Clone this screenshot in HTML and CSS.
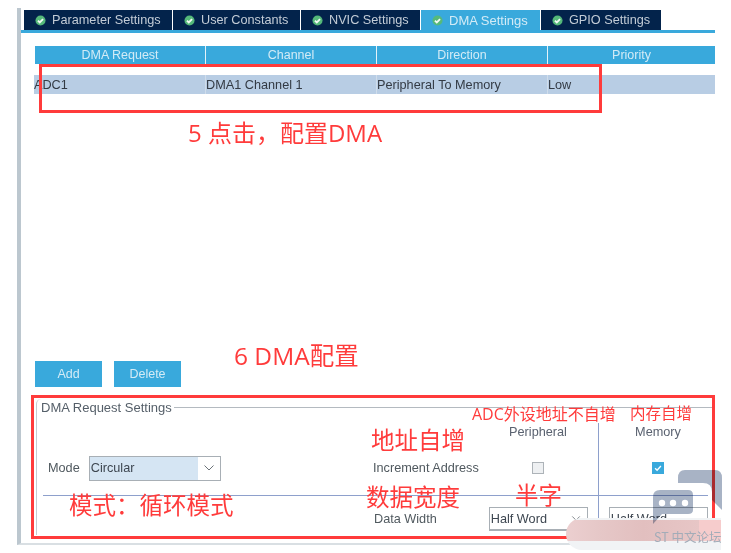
FILE: index.html
```html
<!DOCTYPE html>
<html lang="zh">
<head>
<meta charset="utf-8">
<title>DMA Settings</title>
<link rel="stylesheet" href="styles.css">
</head>
<body>
<div class="window">
  <nav class="tabs">
    <div class="tab t1"><svg class="ok" viewBox="0 0 12 12"><circle cx="6" cy="6" r="5.5"/><path d="M3.2 6.1l2 2 3.6-3.6"/></svg>Parameter Settings</div>
    <div class="tab t2"><svg class="ok" viewBox="0 0 12 12"><circle cx="6" cy="6" r="5.5"/><path d="M3.2 6.1l2 2 3.6-3.6"/></svg>User Constants</div>
    <div class="tab t3"><svg class="ok" viewBox="0 0 12 12"><circle cx="6" cy="6" r="5.5"/><path d="M3.2 6.1l2 2 3.6-3.6"/></svg>NVIC Settings</div>
    <div class="tab t4 active"><svg class="ok" viewBox="0 0 12 12"><circle cx="6" cy="6" r="5.5"/><path d="M3.2 6.1l2 2 3.6-3.6"/></svg>DMA Settings</div>
    <div class="tab t5"><svg class="ok" viewBox="0 0 12 12"><circle cx="6" cy="6" r="5.5"/><path d="M3.2 6.1l2 2 3.6-3.6"/></svg>GPIO Settings</div>
  </nav>

  <div class="thead">
    <div class="th c1">DMA Request</div>
    <div class="th c2">Channel</div>
    <div class="th c3">Direction</div>
    <div class="th c4">Priority</div>
  </div>
  <div class="trow">
    <div class="td c1">ADC1</div>
    <div class="td c2">DMA1 Channel 1</div>
    <div class="td c3">Peripheral To Memory</div>
    <div class="td c4">Low</div>
  </div>

  <div class="buttons">
    <button class="btn">Add</button>
    <button class="btn">Delete</button>
  </div>

  <section class="group">
    <div class="legend"><span>DMA Request Settings</span></div>
    <div class="grid-top">
      <div class="mode-cell">
        <span class="lbl">Mode</span>
        <div class="select"><span class="sel-text">Circular</span><span class="sel-arrow"><svg viewBox="0 0 12 8"><path d="M1.5 1.5L6 6l4.5-4.5"/></svg></span></div>
      </div>
      <div class="inc-cell">
        <span class="lbl inc-lbl">Increment Address</span>
        <div class="per-col"><span class="col-h">Peripheral</span><span class="cb"></span></div>
        <div class="mem-col"><span class="col-h">Memory</span><span class="cb checked"><svg viewBox="0 0 12 12"><path d="M2.5 6.2l2.4 2.4 4.6-5"/></svg></span></div>
      </div>
    </div>
    <div class="rule"></div>
    <div class="grid-bottom">
      <span class="lbl dw-lbl">Data Width</span>
      <div class="mini-select"><span>Half Word</span><svg viewBox="0 0 12 8"><path d="M1.5 1.5L6 6l4.5-4.5"/></svg></div>
      <div class="mini-select second"><span>Half Word</span></div>
    </div>
  </section>
</div>

<div class="mark box1"></div>
<div class="mark box2"></div>
<div class="note n1">5 点击，配置DMA</div>
<div class="note n2">6 DMA配置</div>
<div class="note n3">地址自增</div>
<div class="note n4">数据宽度</div>
<div class="note n5">半字</div>
<div class="note n6">模式：循环模式</div>
<div class="note n7">ADC外设地址不自增</div>
<div class="note n8">内存自增</div>

<div class="smear"></div>
<svg class="wm-icon" viewBox="0 0 76 60">
  <path class="wm-shape" d="M28 10Q28 2 35 2H65Q72 2 72 10V42L62 32V24Q62 15 53 15H28Z"/>
  <path class="wm-shape" d="M3 29Q3 22 10 22H38Q43 22 43 27V42Q43 46 38 46H12L3 56Z"/>
</svg>
<svg class="wm-dots" viewBox="0 0 76 60">
  <circle cx="12" cy="35" r="3.2"/><circle cx="23" cy="35" r="3.2"/><circle cx="35" cy="35" r="3.2"/>
</svg>
<div class="wm-text">ST 中文论坛</div>
</body>
</html>
```
FILE: styles.css
```css
* { box-sizing: border-box; }
html, body { margin: 0; padding: 0; background: #fff; }
body { width: 731px; height: 553px; overflow: hidden; position: relative; font-family: "Liberation Sans", "Noto Sans CJK SC", sans-serif; }

.window { margin: 8px 0 0 17px; width: 698px; height: 537px; border-left: 4px solid #bcc7cf; border-bottom: 2px solid #d9dfe3; display: flex; flex-direction: column; position: relative; }

.tabs { display: flex; gap: 1px; height: 23px; margin-top: 2px; padding-left: 3px; border-bottom: 3px solid #3aa9dc; flex: none; }
.tab { height: 20px; background: #03234b; color: #c3ccd6; font-size: 12.7px; display: flex; align-items: center; padding-left: 11px; gap: 6px; white-space: nowrap; }
.tab.active { background: #39a9dc; color: #d3ebf6; font-size: 13px; }
.t1 { width: 148px; } .t2 { width: 127px; } .t3 { width: 119px; } .t4 { width: 119px; } .t5 { width: 120px; }
.ok { width: 11px; height: 11px; flex: none; }
.ok circle { fill: #55b97a; }
.ok path { fill: none; stroke: #f2faf4; stroke-width: 2; }

.thead { display: flex; height: 18px; margin: 13px 0 0 14px; background: #39a9dc; flex: none; }
.th { color: #d3ebf6; font-size: 12.5px; display: flex; align-items: center; justify-content: center; border-right: 1px solid #e4f2f9; }
.thead .c1 { width: 171px; } .thead .c2 { width: 171px; } .thead .c3 { width: 171px; } .thead .c4 { width: 167px; border-right: 0; }

.trow { display: flex; height: 19px; margin: 11px 0 0 13px; background: #b8cde4; flex: none; }
.td { color: #333a44; font-size: 12.7px; display: flex; align-items: center; border-right: 1px solid #cfdcea; }
.trow .c1 { width: 172px; } .trow .c2 { width: 171px; } .trow .c3 { width: 171px; } .trow .c4 { width: 167px; border-right: 0; }

.buttons { display: flex; gap: 12px; margin: 267px 0 0 14px; flex: none; }
.btn { width: 67px; height: 26px; border: 0; padding: 0; background: #39a9dc; color: #d3ebf6; font: 12.5px "Liberation Sans", sans-serif; }

.group { position: relative; margin: 12px 0 0 15px; height: 136px; border-left: 1px solid #c5cbd0; border-top-left-radius: 5px; flex: none; }
.legend { height: 16px; display: flex; align-items: center; font-size: 13px; color: #555f69; margin-left: -1px; }
.legend span { padding-left: 5px; padding-right: 2px; white-space: nowrap; }
.legend::after { content: ""; flex: 1; height: 1px; background: #b4bac0; }

.grid-top { display: flex; height: 80px; margin-left: 6px; }
.mode-cell { width: 325px; flex: none; display: flex; align-items: center; padding: 26px 0 0 5px; gap: 9px; }
.lbl { font-size: 12.7px; color: #50595f; white-space: nowrap; display: block; line-height: 14px; }
.select { width: 132px; height: 25px; border: 1px solid #a8afb5; display: flex; background: #fff; }
.sel-text { width: 108px; background: #d5e5f3; font-size: 12.7px; color: #3d4650; padding-left: 1px; display: flex; align-items: center; }
.sel-arrow { flex: 1; display: flex; align-items: center; justify-content: center; }
.sel-arrow svg { width: 12px; height: 8px; }
svg path { fill: none; }
.sel-arrow path, .mini-select path { stroke: #6b7278; stroke-width: 1; }

.inc-cell { display: flex; padding-left: 5px; flex: none; }
.inc-lbl { margin-top: 46px; width: 105px; flex: none; }
.per-col, .mem-col { display: flex; flex-direction: column; align-items: center; width: 120px; flex: none; padding-top: 10px; position: relative; }
.mem-col::before { content: ""; position: absolute; left: 0; top: 8px; width: 1px; height: 100px; background: #8ea0cc; }
.col-h { font-size: 12.7px; color: #5a6270; line-height: 14px; }
.cb { width: 12px; height: 12px; margin-top: 23px; background: #eef0f2; border: 1px solid #adb3b8; display: block; }
.cb.checked { background: #39a9dc; border-color: #39a9dc; }
.cb svg { width: 10px; height: 10px; display: block; }
.cb svg path { stroke: #fff; stroke-width: 1.6; }

.rule { height: 1px; margin: 0 7px 0 6px; background: #8ea0cc; }

.grid-bottom { height: 38px; display: flex; align-items: flex-start; }
.dw-lbl { margin: 16px 0 0 337px; }
.mini-select { width: 99px; height: 24px; margin: 11px 0 0 52px; border: 1px solid #a8afb5; border-bottom-width: 2px; font-size: 12.7px; color: #3d4650; display: flex; align-items: center; justify-content: space-between; padding: 0 6px 0 1px; background: #fff; flex: none; }
.mini-select svg { width: 10px; height: 7px; }
.mini-select.second { margin-left: 21px; }

.mark { position: absolute; border: 3px solid #ff3b3b; }
.box1 { left: 39px; top: 64px; width: 563px; height: 49px; }
.box2 { left: 31px; top: 395px; width: 684px; height: 144px; }

.note { position: absolute; color: #ff3b3b; white-space: nowrap; font-family: "Noto Sans CJK SC", sans-serif; line-height: 1; }
.n1 { left: 188px; top: 121px; font-size: 24px; font-family: "Open Sans", "Noto Sans CJK SC", sans-serif; }
.n2 { left: 234px; top: 344px; font-size: 24.5px; font-family: "Open Sans", "Noto Sans CJK SC", sans-serif; }
.n3 { left: 371px; top: 428px; font-size: 23.5px; }
.n4 { left: 366px; top: 485px; font-size: 23.5px; }
.n5 { left: 515px; top: 483px; font-size: 23.5px; }
.n6 { left: 69px; top: 493px; font-size: 23.5px; }
.n7 { left: 472px; top: 406px; font-size: 16px; font-family: "Open Sans", "Noto Sans CJK SC", sans-serif; }
.n8 { left: 630px; top: 405px; font-size: 15.5px; }

.smear { position: absolute; left: 566px; top: 518px; width: 155px; height: 32px; border-radius: 16px 0 0 16px; background: linear-gradient(90deg, #eccfd0 0, #e6c8c8 20%, #e2bfbf 50%, #e7c6c6 86%, #f6cccc 86%, #f6cccc 100%) top 2px left 0 / 100% 21px no-repeat, #f1f3f5; }
.wm-icon, .wm-dots { position: absolute; left: 650px; top: 468px; width: 76px; height: 60px; }
.wm-icon { mix-blend-mode: multiply; }
.wm-shape { fill: #a8b3c5; }
.wm-dots { fill: #fff; }
.wm-text { position: absolute; left: 654px; top: 530px; font-size: 12.5px; color: #a3acb8; white-space: nowrap; font-family: "Noto Sans CJK SC", sans-serif; line-height: 1.15; }
```
